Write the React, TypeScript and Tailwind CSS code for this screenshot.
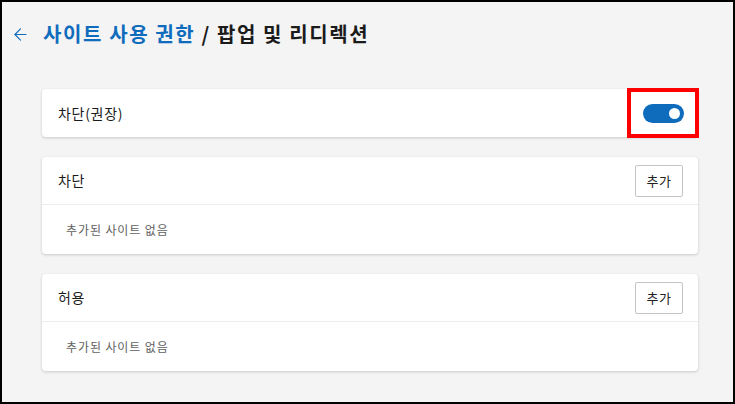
import { ArrowLeft } from "lucide-react";

const font = { fontFamily: '"Noto Sans CJK KR", "Noto Sans", sans-serif' };

function Toggle() {
  return (
    <div className="flex h-[50px] w-[72px] items-center justify-center border-[4px] border-[#ff0000]">
      <div className="flex h-[19px] w-[41px] items-center justify-end rounded-full bg-[#0f6cbd] pr-[4px]">
        <div className="h-[11px] w-[11px] rounded-full bg-white" />
      </div>
    </div>
  );
}

function SiteList({ title }: { title: string }) {
  return (
    <div className="rounded-[4px] bg-white shadow-[0_1px_3px_rgba(0,0,0,0.18)]">
      <div className="flex h-[48px] items-center justify-between border-b border-[#ececec] pl-[16px] pr-[15px]">
        <span className="text-[14px] tracking-[0.7px] text-[#1b1b1b]">{title}</span>
        <button className="flex h-[32px] w-[48px] items-center justify-center rounded-[2px] border border-[#c4c4c4] bg-white text-[13px] tracking-[0.5px] text-[#222]">
          추가
        </button>
      </div>
      <div className="flex h-[49px] items-center pl-[24px] text-[12px] tracking-[0.9px] text-[#616161]">
        추가된 사이트 없음
      </div>
    </div>
  );
}

export default function App() {
  return (
    <div
      className="h-[404px] w-[735px] border-2 border-black bg-[#f4f4f4]"
      style={font}
    >
      <div className="flex h-[64px] items-center pl-[9px]">
        <ArrowLeft size={19} strokeWidth={1.4} className="text-[#0f6cbd]" />
        <h1 className="ml-[13px] text-[20px] font-bold tracking-[1.6px] text-[#1b1b1b]">
          <span className="text-[#0f6cbd]">사이트 사용 권한</span> / 팝업 및 리디렉션
        </h1>
      </div>

      <div className="mt-[23px] flex w-[696px] flex-col gap-[20px] pl-[40px]">
        <div className="flex h-[48px] items-center justify-between rounded-[4px] bg-white pl-[16px] shadow-[0_1px_3px_rgba(0,0,0,0.18)]">
          <span className="text-[14px] tracking-[0.7px] text-[#1b1b1b]">차단(권장)</span>
          <div className="-mr-px">
            <Toggle />
          </div>
        </div>
        <SiteList title="차단" />
        <SiteList title="허용" />
      </div>
    </div>
  );
}
